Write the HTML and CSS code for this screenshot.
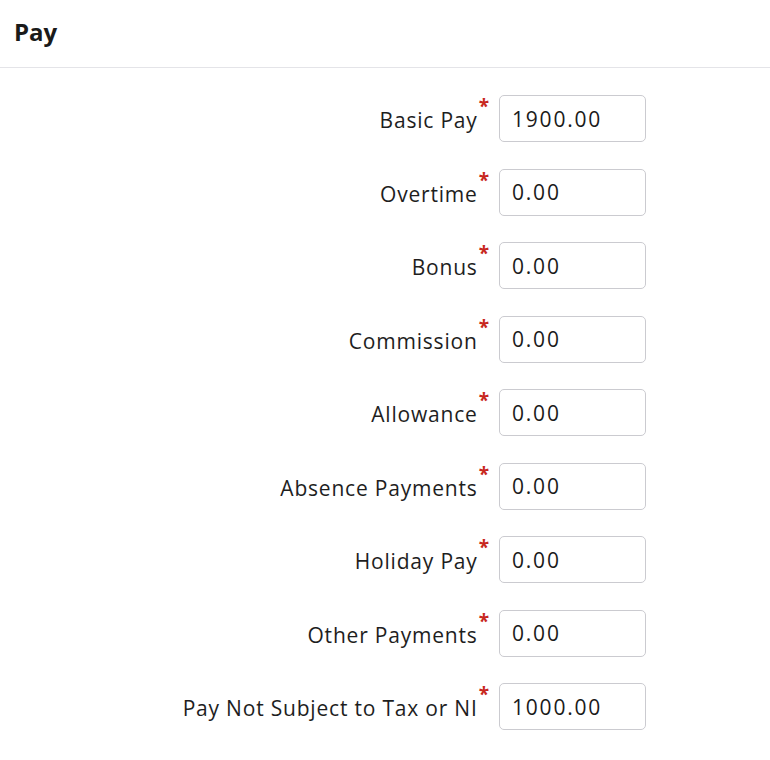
FILE: index.html
```html
<!DOCTYPE html>
<html lang="en">
  <head>
    <meta charset="UTF-8" />
    <title>Pay</title>
    <link rel="stylesheet" href="styles.css">
  </head>
  <body>
    <header class="panel-head">
      <h1>Pay</h1>
    </header>

    <form class="pay-form">
      <div class="row">
        <label>Basic Pay<span class="req">*</span></label>
        <input type="text" value="1900.00" />
      </div>
      <div class="row">
        <label>Overtime<span class="req">*</span></label>
        <input type="text" value="0.00" />
      </div>
      <div class="row">
        <label>Bonus<span class="req">*</span></label>
        <input type="text" value="0.00" />
      </div>
      <div class="row">
        <label>Commission<span class="req">*</span></label>
        <input type="text" value="0.00" />
      </div>
      <div class="row">
        <label>Allowance<span class="req">*</span></label>
        <input type="text" value="0.00" />
      </div>
      <div class="row">
        <label>Absence Payments<span class="req">*</span></label>
        <input type="text" value="0.00" />
      </div>
      <div class="row">
        <label>Holiday Pay<span class="req">*</span></label>
        <input type="text" value="0.00" />
      </div>
      <div class="row">
        <label>Other Payments<span class="req">*</span></label>
        <input type="text" value="0.00" />
      </div>
      <div class="row">
        <label>Pay Not Subject to Tax or NI<span class="req">*</span></label>
        <input type="text" value="1000.00" />
      </div>
    </form>
  </body>
</html>
```

FILE: styles.css
```css
body {
  margin: 0;
  background-color: #fff;
  color: #1e1e1e;
  font-family: "Open Sans", "Noto Sans", sans-serif;
}
.panel-head {
  height: 68px;
  border-bottom: 1px solid #e4e4e8;
  box-sizing: border-box;
  padding: 15px 14px 0;
}
h1 {
  margin: 0;
  font-size: 24px;
  font-weight: 700;
  color: #1a1a1a;
}
.pay-form {
  display: flex;
  flex-direction: column;
  gap: 26.5px;
  padding: 27px 124px 0 0;
}
.row {
  display: flex;
  justify-content: flex-end;
  align-items: center;
  gap: 10px;
}
label {
  font-size: 21px;
  letter-spacing: 0.8px;
  color: #1e1e1e;
  padding-top: 3px;
}
.req {
  display: inline-block;
  vertical-align: top;
  margin-top: -13px;
  margin-left: 1px;
  letter-spacing: 0;
  color: #c8281e;
  font-size: 19px;
  font-weight: 700;
}
input {
  box-sizing: border-box;
  width: 147px;
  height: 47px;
  padding: 0 12px;
  border: 1px solid #cbcbd0;
  border-radius: 5px;
  font-family: inherit;
  font-size: 21px;
  letter-spacing: 1.8px;
  color: #1a1a1a;
}
```
